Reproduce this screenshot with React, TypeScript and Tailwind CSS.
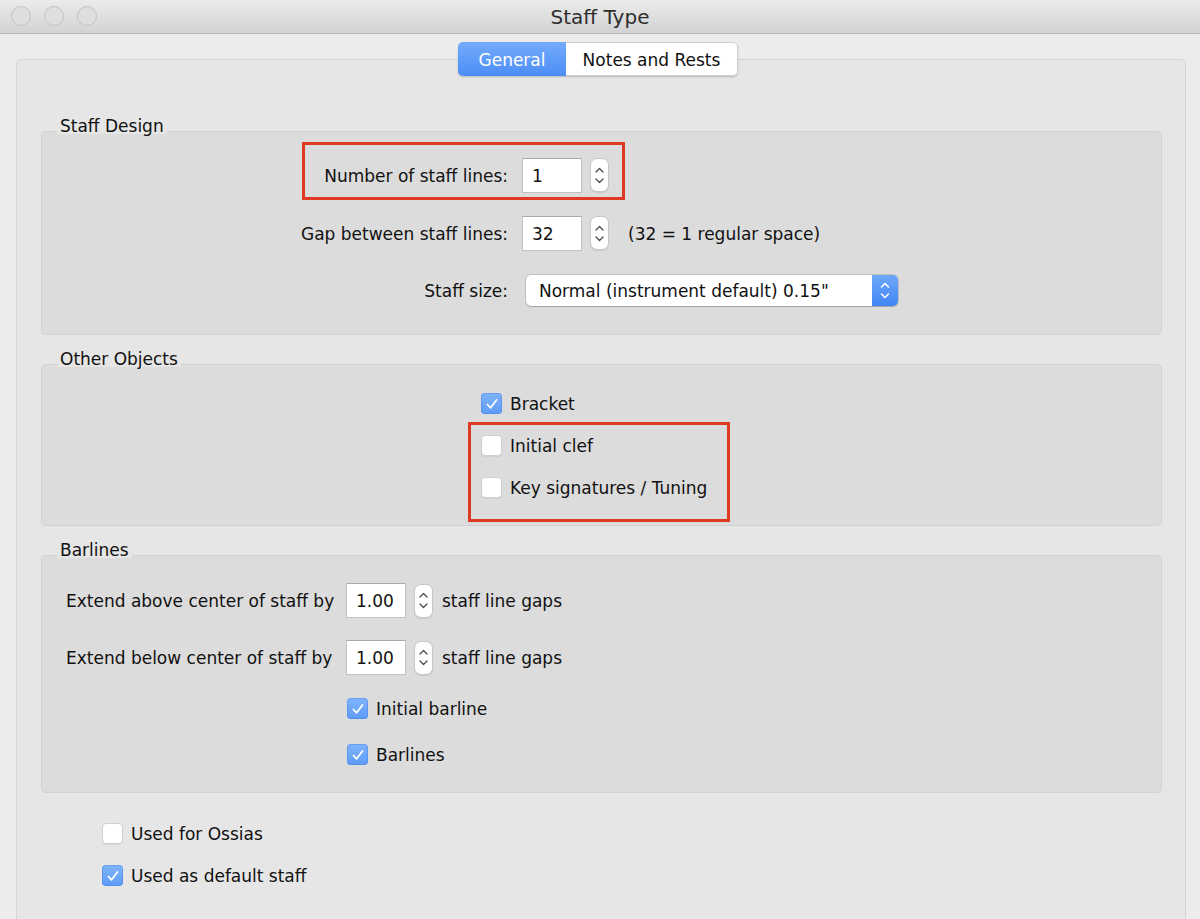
import React from "react";

function Stepper() {
  return (
    <div className="w-[19px] h-[34px] rounded-[7px] bg-white border border-[#c6c6c6] shadow-[0_1px_1px_rgba(0,0,0,0.08)] flex flex-col items-center justify-center gap-[5px]">
      <svg width="9" height="6" viewBox="0 0 9 6">
        <path d="M1 5 L4.5 1.5 L8 5" stroke="#4a4a4a" strokeWidth="1.3" fill="none" strokeLinecap="round" strokeLinejoin="round" />
      </svg>
      <svg width="9" height="6" viewBox="0 0 9 6">
        <path d="M1 1 L4.5 4.5 L8 1" stroke="#4a4a4a" strokeWidth="1.3" fill="none" strokeLinecap="round" strokeLinejoin="round" />
      </svg>
    </div>
  );
}

function NumField({ value }: { value: string }) {
  return (
    <div className="w-[60px] h-[35px] bg-white border border-[#c2c2c2] border-t-[#aaaaaa] flex items-center pl-[9px] pt-[3px] text-[17px] text-[#111]">
      {value}
    </div>
  );
}

function Check({ checked }: { checked: boolean }) {
  if (checked) {
    return (
      <div className="w-[21px] h-[21px] rounded-[4px] bg-linear-to-b from-[#80b4fb] to-[#5e9bf8] shadow-[inset_0_0_0_1px_rgba(60,120,230,0.35)] flex items-center justify-center shrink-0">
        <svg width="14" height="14" viewBox="0 0 14 14">
          <path d="M2.5 7.5 L5.6 10.8 L11.5 3" stroke="white" strokeWidth="1.8" fill="none" strokeLinecap="round" strokeLinejoin="round" />
        </svg>
      </div>
    );
  }
  return (
    <div className="w-[21px] h-[21px] rounded-[4px] bg-white border border-[#cfcfcf] shadow-[0_1px_1px_rgba(0,0,0,0.06)] shrink-0" />
  );
}

function CheckRow({ checked, label }: { checked: boolean; label: string }) {
  return (
    <div className="flex items-center gap-[8px] h-[21px] text-[17px] text-[#111]">
      <Check checked={checked} />
      <span className="pt-[3px]">{label}</span>
    </div>
  );
}

function Group({
  label,
  height,
  children,
}: {
  label: string;
  height: string;
  children: React.ReactNode;
}) {
  return (
    <div className="flex flex-col">
      <div className="relative z-[1] self-start ml-[16px] px-[3px] h-[20px] leading-[20px] pt-[2px] bg-[#e6e6e6] text-[17px] text-[#111]">
        {label}
      </div>
      <div className={`relative -mt-[3px] rounded-[5px] bg-[#dcdcdc] border border-[#d2d2d2] ${height}`}>
        {children}
      </div>
    </div>
  );
}

export default function App() {
  return (
    <div className="w-[1200px] h-[919px] bg-[#ececec] overflow-hidden flex flex-col font-['DejaVu_Sans',sans-serif] text-[#111]">
      {/* Title bar */}
      <div className="relative h-[34px] shrink-0 bg-linear-to-b from-[#ebebeb] to-[#d3d3d3] border-b border-[#b3b3b3] flex items-center justify-center">
        <div className="absolute left-[11px] top-[6px] flex gap-[13px]">
          <div className="w-[20px] h-[20px] rounded-full bg-[#dedede] border border-[#c3c3c3]" />
          <div className="w-[20px] h-[20px] rounded-full bg-[#dedede] border border-[#c3c3c3]" />
          <div className="w-[20px] h-[20px] rounded-full bg-[#dedede] border border-[#c3c3c3]" />
        </div>
        <span className="text-[20px] text-[#2e2e2e]">Staff Type</span>
      </div>

      {/* Body */}
      <div className="flex-1 flex flex-col pt-[8px]">
        {/* Tabs */}
        <div className="relative z-10 flex justify-center h-[34px] shrink-0">
          <div className="flex h-[34px] rounded-[5px] shadow-[0_1px_2px_rgba(0,0,0,0.2)] overflow-hidden ml-[-4px]">
            <div className="w-[108px] h-full bg-linear-to-b from-[#73abfb] to-[#4c8ef6] text-white text-[17px] pt-[3px] flex items-center justify-center">
              General
            </div>
            <div className="w-[172px] h-full bg-white border border-l-0 border-[#cfcfcf] rounded-r-[5px] text-[17px] text-[#111] pt-[3px] flex items-center justify-center">
              Notes and Rests
            </div>
          </div>
        </div>

        {/* Tab box */}
        <div className="flex-1 -mt-[17px] ml-[16px] mr-[14px] -mb-[10px] rounded-[5px] bg-[#e6e6e6] border border-[#d6d6d6] pt-[54px] pl-[24px] pr-[23px] flex flex-col">
          <div className="flex flex-col gap-[12px]">
            <Group label="Staff Design" height="h-[204px]">
              <div className="flex flex-col pt-[26px]">
                <div className="flex items-center h-[34px]">
                  <div className="w-[466px] text-right text-[17px] pt-[3px]">Number of staff lines:</div>
                  <div className="ml-[14px]"><NumField value="1" /></div>
                  <div className="ml-[8px]"><Stepper /></div>
                </div>
                <div className="flex items-center h-[34px] mt-[24px]">
                  <div className="w-[466px] text-right text-[17px] pt-[3px]">Gap between staff lines:</div>
                  <div className="ml-[14px]"><NumField value="32" /></div>
                  <div className="ml-[8px]"><Stepper /></div>
                  <div className="ml-[19px] text-[17px] pt-[3px]">(32 = 1 regular space)</div>
                </div>
                <div className="flex items-center h-[31px] mt-[25px]">
                  <div className="w-[466px] text-right text-[17px] pt-[3px]">Staff size:</div>
                  <div className="ml-[18px] w-[372px] h-[31px] rounded-[5px] bg-white shadow-[0_0_0_1px_rgba(0,0,0,0.12),0_1px_1px_rgba(0,0,0,0.15)] flex overflow-hidden">
                    <div className="flex-1 flex items-center pl-[13px] pt-[3px] text-[17px]">Normal (instrument default) 0.15"</div>
                    <div className="w-[26px] h-full bg-linear-to-b from-[#6ea8fb] to-[#3f85f3] flex flex-col items-center justify-center gap-[5px]">
                      <svg width="10" height="6" viewBox="0 0 10 6">
                        <path d="M1.5 5 L5 1.5 L8.5 5" stroke="white" strokeWidth="1.5" fill="none" strokeLinecap="round" strokeLinejoin="round" />
                      </svg>
                      <svg width="10" height="6" viewBox="0 0 10 6">
                        <path d="M1.5 1 L5 4.5 L8.5 1" stroke="white" strokeWidth="1.5" fill="none" strokeLinecap="round" strokeLinejoin="round" />
                      </svg>
                    </div>
                  </div>
                </div>
              </div>
              <div className="absolute left-[260px] top-[10px] w-[323px] h-[58px] border-[3px] border-[#de3a23]" />
            </Group>

            <Group label="Other Objects" height="h-[162px]">
              <div className="flex flex-col pt-[28px] pl-[439px] gap-[21px]">
                <CheckRow checked label="Bracket" />
                <CheckRow checked={false} label="Initial clef" />
                <CheckRow checked={false} label="Key signatures / Tuning" />
              </div>
              <div className="absolute left-[426px] top-[57px] w-[262px] h-[100px] border-[3px] border-[#de3a23]" />
            </Group>

            <Group label="Barlines" height="h-[238px]">
              <div className="flex flex-col pt-[27px] pl-[24px]">
                <div className="flex items-center h-[35px]">
                  <div className="w-[280px] text-[17px] pt-[3px]">Extend above center of staff by</div>
                  <NumField value="1.00" />
                  <div className="ml-[8px]"><Stepper /></div>
                  <div className="ml-[9px] text-[17px] pt-[3px]">staff line gaps</div>
                </div>
                <div className="flex items-center h-[35px] mt-[22px]">
                  <div className="w-[280px] text-[17px] pt-[3px]">Extend below center of staff by</div>
                  <NumField value="1.00" />
                  <div className="ml-[8px]"><Stepper /></div>
                  <div className="ml-[9px] text-[17px] pt-[3px]">staff line gaps</div>
                </div>
                <div className="flex flex-col pl-[281px] mt-[23px] gap-[25px]">
                  <CheckRow checked label="Initial barline" />
                  <CheckRow checked label="Barlines" />
                </div>
              </div>
            </Group>
          </div>

          <div className="flex flex-col pl-[61px] mt-[30px] gap-[21px]">
            <CheckRow checked={false} label="Used for Ossias" />
            <CheckRow checked label="Used as default staff" />
          </div>
        </div>
      </div>
    </div>
  );
}
